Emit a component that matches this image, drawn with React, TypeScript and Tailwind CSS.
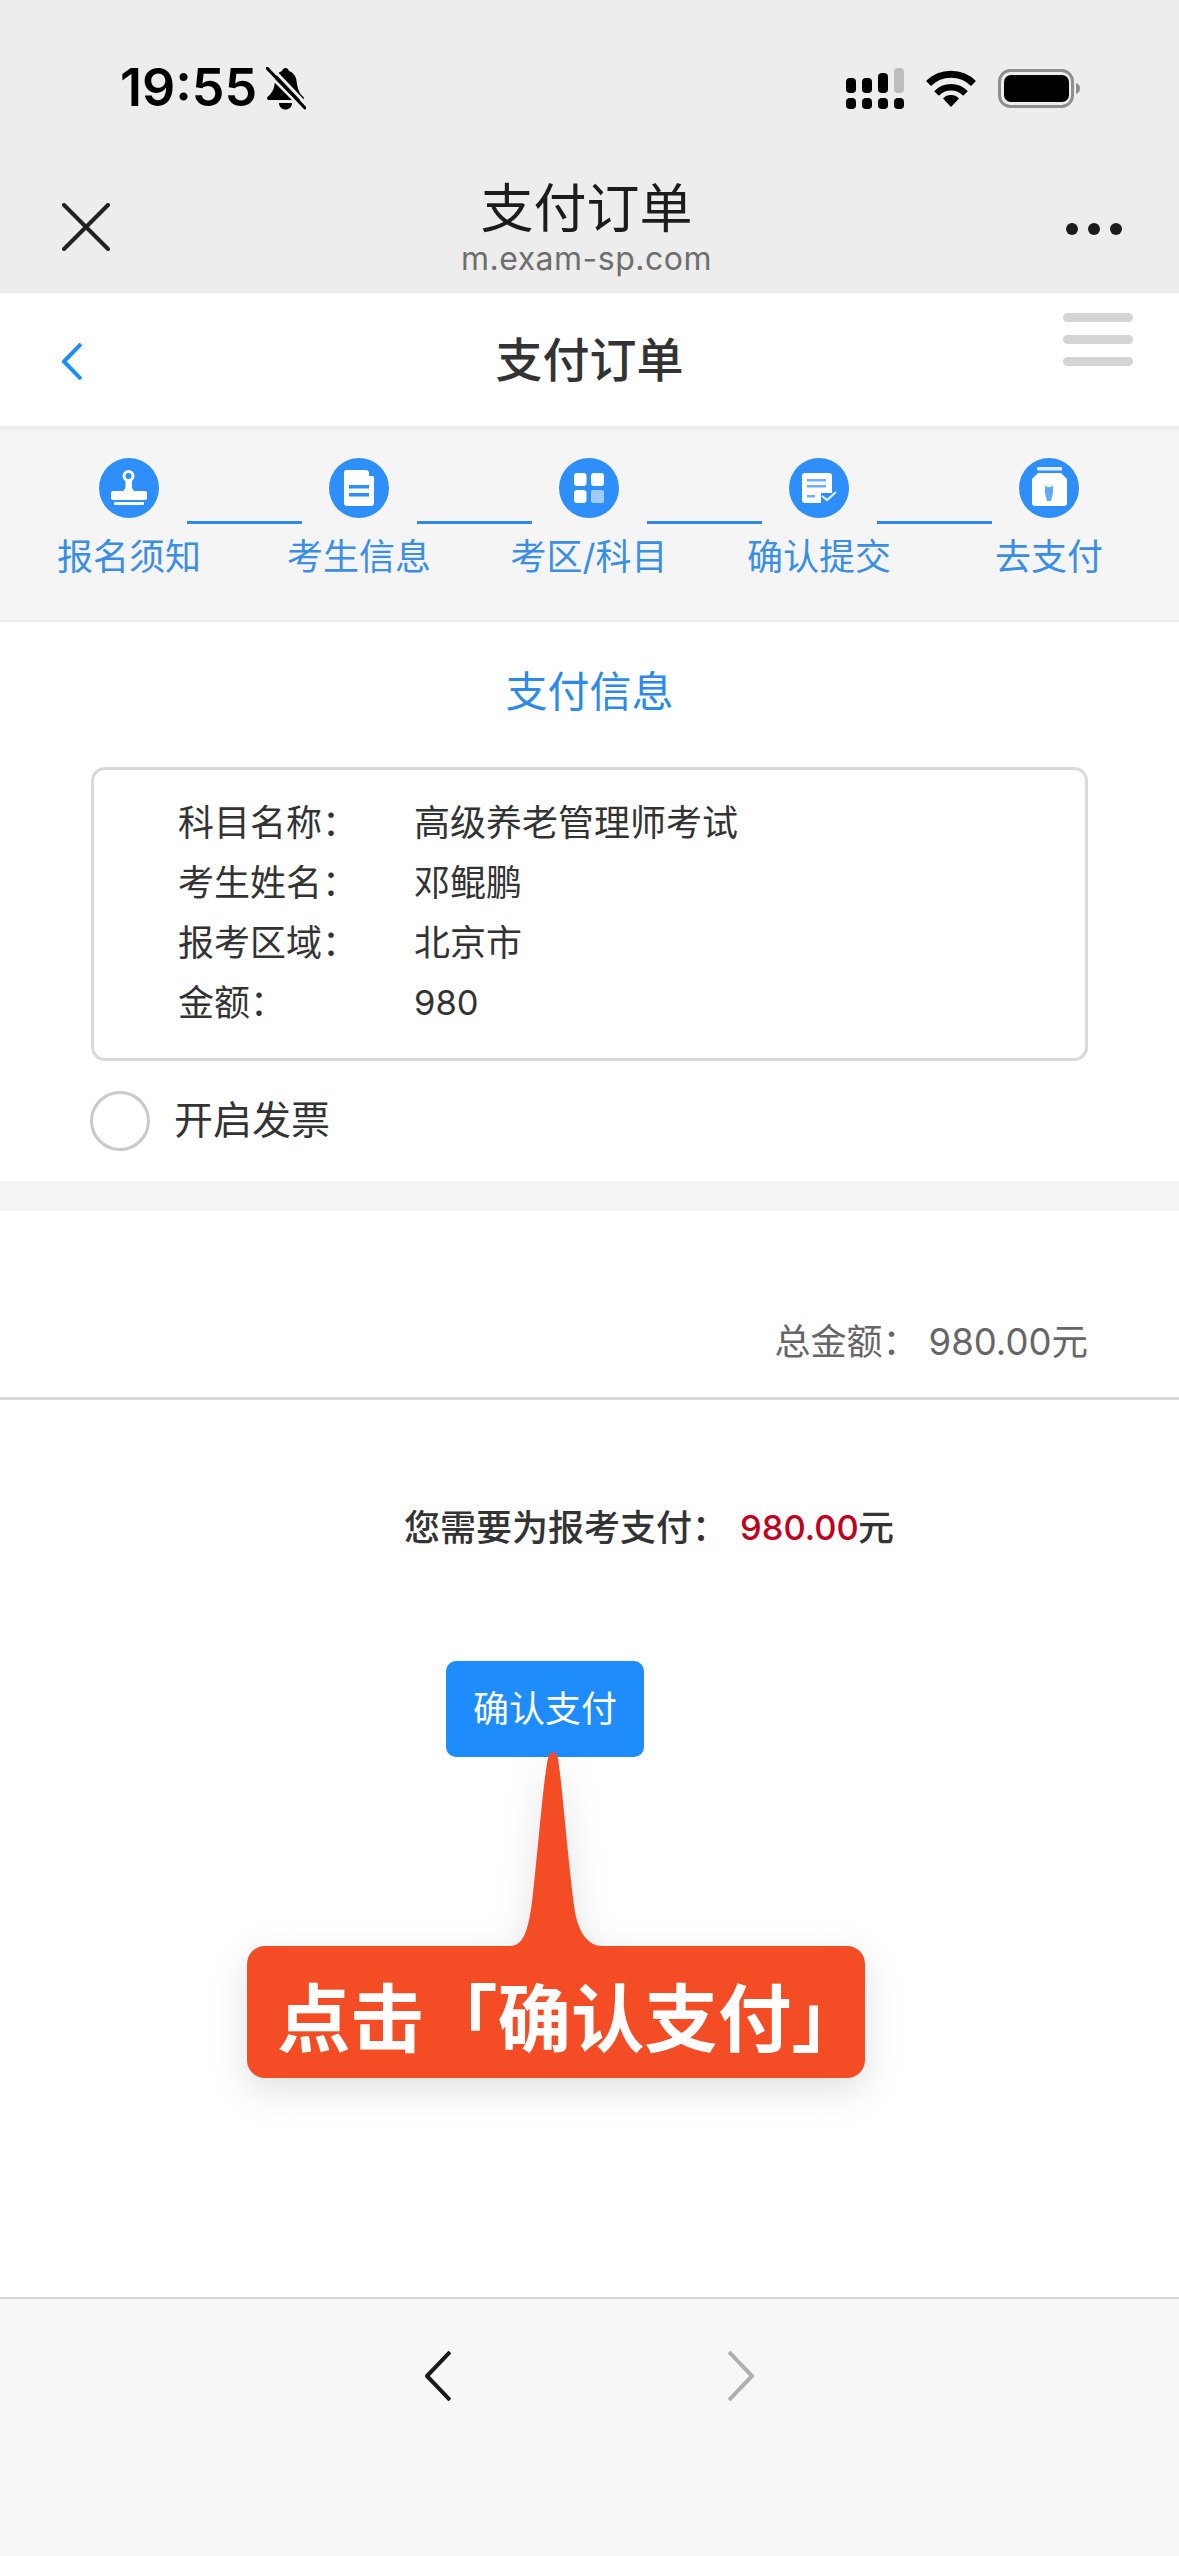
import React from "react";

const FONT = "font-['Inter','Noto_Sans_CJK_SC',sans-serif]";

function Signal() {
  return (
    <svg width="58" height="41" viewBox="0 0 58 41" className="block">
      <rect x="0" y="10" width="10" height="15" rx="4" fill="#000" />
      <rect x="16" y="10" width="10" height="15" rx="4" fill="#000" />
      <rect x="32" y="5" width="10" height="20" rx="4" fill="#000" />
      <rect x="48" y="0" width="10" height="25" rx="4" fill="#bdbdbd" />
      <rect x="0" y="30" width="10" height="11" rx="4" fill="#000" />
      <rect x="16" y="30" width="10" height="11" rx="4" fill="#000" />
      <rect x="32" y="30" width="10" height="11" rx="4" fill="#000" />
      <rect x="48" y="30" width="10" height="11" rx="4" fill="#000" />
    </svg>
  );
}

function Wifi() {
  return (
    <svg width="50" height="37" viewBox="0 0 50 37" className="block">
      <path d="M2.5 13.5 A32 32 0 0 1 47.5 13.5" fill="none" stroke="#000" strokeWidth="7" />
      <path d="M10.5 23.5 A20 20 0 0 1 39.5 23.5" fill="none" stroke="#000" strokeWidth="6.5" />
      <path d="M25 37 L17 28.5 A11 11 0 0 1 33 28.5 Z" fill="#000" />
    </svg>
  );
}

function Battery() {
  return (
    <svg width="83" height="39" viewBox="0 0 83 39" className="block">
      <rect x="1.5" y="1.5" width="73" height="36" rx="11" fill="none" stroke="#8e8e8e" strokeWidth="3" />
      <rect x="6" y="6" width="65" height="27" rx="7" fill="#000" />
      <path d="M78 14 C81 15 82 17 82 19.5 C82 22 81 24 78 25 Z" fill="#8e8e8e" />
    </svg>
  );
}

function BellOff() {
  return (
    <svg width="40" height="43" viewBox="0 0 40 43" className="block">
      <path d="M19.5 1 C17.5 1 16.5 2.5 16 4 C11.5 5.5 9.5 9.5 9 14 C8.3 21 7 25.5 1.5 30 C0.7 31 1 33 3 33 L36 33 C38 33 38.3 31 37.5 30 C33 26.5 31.5 21 30.5 14 C30 9.5 27.5 5.5 23 4 C22.5 2.5 21.5 1 19.5 1 Z" fill="#000" />
      <path d="M13 36 C13 40 16 42.5 19.5 42.5 C23 42.5 26 40 26 36 Z" fill="#000" />
      <path d="M-1 4 L36 41" stroke="#ededed" strokeWidth="3" />
      <path d="M1 1 L39 41" stroke="#000" strokeWidth="3" strokeLinecap="round" />
      <path d="M5 0 L41 38" stroke="#ededed" strokeWidth="3" />
    </svg>
  );
}

function Chevron({ color, dir, w, h, sw }: { color: string; dir: "l" | "r"; w: number; h: number; sw: number }) {
  const d = dir === "l" ? `M${w - 1} 1 L2 ${h / 2} L${w - 1} ${h - 1}` : `M1 1 L${w - 2} ${h / 2} L1 ${h - 1}`;
  return (
    <svg width={w} height={h} viewBox={`0 0 ${w} ${h}`} className="block">
      <path d={d} fill="none" stroke={color} strokeWidth={sw} strokeLinejoin="round" />
    </svg>
  );
}

const BLUE = "#2e8ffa";

function IconCircle({ children }: { children: React.ReactNode }) {
  return (
    <svg width="60" height="60" viewBox="0 0 60 60" className="block shrink-0">
      <circle cx="30" cy="30" r="30" fill={BLUE} />
      {children}
    </svg>
  );
}

const Stamp = () => (
  <IconCircle>
    <circle cx="29.5" cy="18" r="4.5" fill="none" stroke="#fff" strokeWidth="3" />
    <path d="M26.5 21 L33 21 L33 30 L35 33 L24 33 L26.5 30 Z" fill="#fff" />
    <rect x="12" y="33" width="36" height="9" rx="2" fill="#fff" />
    <rect x="15" y="44" width="30" height="3" rx="1" fill="#fff" />
  </IconCircle>
);

const Doc = () => (
  <IconCircle>
    <path d="M17 12 L38 12 L45 19 L45 45 Q45 48 42 48 L18 48 Q15 48 15 45 L15 14 Q15 12 17 12 Z" fill="#fff" />
    <rect x="20" y="27" width="20" height="3.5" fill={BLUE} />
    <rect x="20" y="35" width="20" height="3.5" fill={BLUE} />
    <path d="M40 12 L46 18 L40 18 Z" fill={BLUE} />
  </IconCircle>
);

const Grid = () => (
  <IconCircle>
    <rect x="15" y="15" width="12.5" height="13" rx="3" fill="#fff" />
    <rect x="32" y="15" width="13" height="13" rx="3" fill="#fff" />
    <rect x="15" y="32" width="12.5" height="13" rx="3" fill="#fff" />
    <rect x="32" y="32" width="13" height="13" rx="2" fill="#fff" opacity="0.55" />
  </IconCircle>
);

const Confirm = () => (
  <IconCircle>
    <rect x="13" y="15" width="30" height="30" rx="3" fill="#fff" />
    <rect x="18" y="21" width="19" height="2.5" fill={BLUE} opacity="0.7" />
    <rect x="18" y="27" width="19" height="2.5" fill={BLUE} opacity="0.7" />
    <rect x="18" y="37" width="8" height="2.5" fill={BLUE} opacity="0.7" />
    <path d="M32 35 L48 35 L48 45 L32 45 Z" fill={BLUE} />
    <path d="M33 38 L38 42 L47 34" fill="none" stroke="#fff" strokeWidth="2.2" opacity="0.85" />
  </IconCircle>
);

const Jar = () => (
  <IconCircle>
    <rect x="18" y="9" width="25" height="3.5" rx="1" fill="#fff" opacity="0.85" />
    <path d="M19 15 L42 15 L48 21 L48 45 Q48 48 45 48 L16 48 Q13 48 13 45 L13 21 Z" fill="#fff" />
    <path d="M26 27 L28 29 L32 29 L34 27 L34 35 L32 43 L28 43 L26 35 Z" fill={BLUE} opacity="0.75" />
  </IconCircle>
);

const STEPS = ["报名须知", "考生信息", "考区/科目", "确认提交", "去支付"];
const ICONS = [Stamp, Doc, Grid, Confirm, Jar];

const ROWS = [
  ["科目名称：", "高级养老管理师考试"],
  ["考生姓名：", "邓鲲鹏"],
  ["报考区域：", "北京市"],
  ["金额：", "980"],
];

function Connector() {
  return <div className="mx-[27.5px] mb-[-6px] h-[3px] w-[115px] shrink-0 self-end bg-[#2e8ae8]" />;
}

function Callout() {
  return (
    <div className="absolute left-[247px] top-[1752px] w-[618px] drop-shadow-[0_12px_18px_rgba(0,0,0,0.12)]">
      <svg width="618" height="196" viewBox="0 0 618 196" className="mb-[-2px] block">
        <path
          d="M263 194 C276 194 281 180 285 150 C291 100 296 30 301 6 C303 -2 309 -2 311 6 C316 40 321 110 328 160 C332 182 342 194 355 194 Z"
          fill="#f44c25"
        />
      </svg>
      <div className="flex h-[132px] items-start justify-center rounded-[18px] bg-[#f44c25] pl-[30px] pt-[28px] text-[73.5px] font-bold leading-[92px] text-white">
        点击「确认支付」
      </div>
    </div>
  );
}

export default function App() {
  return (
    <div className={`${FONT} relative flex h-[2556px] w-[1179px] flex-col overflow-hidden bg-white text-[#333]`}>
      {/* system + webview chrome */}
      <div className="h-[293px] shrink-0 bg-[#ededed]">
        <div className="mt-[67px] flex h-[42px] items-center justify-between pl-[120px] pr-[98px]">
          <div className="flex items-center gap-[9px]">
            <span className="text-[52px] font-semibold leading-[42px] text-black">19:55</span>
            <BellOff />
          </div>
          <div className="flex items-center gap-[22px]">
            <Signal />
            <Wifi />
            <Battery />
          </div>
        </div>
        <div className="mt-[69px] flex h-[115px] items-start justify-between pl-[62px] pr-[57px]">
          <svg width="48" height="48" viewBox="0 0 48 48" className="mt-[25px] block">
            <path d="M2 2 L46 46 M46 2 L2 46" stroke="#222" strokeWidth="4" strokeLinecap="round" />
          </svg>
          <div className="ml-[-3px] flex flex-col items-center">
            <div className="text-[53px] font-normal leading-[62px] text-[#1c1c1c]">支付订单</div>
            <div className="text-[32px] leading-[38px] tracking-[0.5px] text-[#6e6e6e]">m.exam-sp.com</div>
          </div>
          <div className="mt-[45px] flex gap-[10px]">
            <div className="h-[12px] w-[12px] rounded-full bg-[#1c1c1c]" />
            <div className="h-[12px] w-[12px] rounded-full bg-[#1c1c1c]" />
            <div className="h-[12px] w-[12px] rounded-full bg-[#1c1c1c]" />
          </div>
        </div>
      </div>

      {/* page header */}
      <div className="grid h-[138px] shrink-0 grid-cols-[1fr_auto_1fr] items-start border-b-[5px] border-[#eeeeee] px-[46px]">
        <div className="ml-[16px] mt-[50px]">
          <Chevron color="#1e8cfb" dir="l" w={20} h={37} sw={4} />
        </div>
        <div className="mt-[39px] text-[47px] font-medium leading-[56px] text-[#333]">支付订单</div>
        <div className="mt-[20px] flex w-[70px] flex-col gap-[13px] justify-self-end">
          <div className="h-[9px] rounded-full bg-[#d4d4d4]" />
          <div className="h-[9px] rounded-full bg-[#d4d4d4]" />
          <div className="h-[9px] rounded-full bg-[#d4d4d4]" />
        </div>
      </div>

      {/* steps */}
      <div className="h-[191px] shrink-0 border-b-[2px] border-[#ececec] bg-[#f5f5f5]">
        <div className="flex pl-[99px] pt-[27px]">
          {ICONS.map((Icon, i) => (
            <React.Fragment key={i}>
              <Icon />
              {i < 4 && <Connector />}
            </React.Fragment>
          ))}
        </div>
        <div className="mt-[16px] grid grid-cols-[repeat(5,230px)] pl-[14px]">
          {STEPS.map((s) => (
            <div key={s} className="text-center text-[36px] leading-[46px] text-[#3a8ee6]">
              {s}
            </div>
          ))}
        </div>
      </div>

      {/* pay info */}
      <div className="flex h-[140px] shrink-0 items-center justify-center text-[42px] leading-[50px] text-[#2e8ae8]">
        支付信息
      </div>
      <div className="mx-[91px] mt-[5px] h-[294px] shrink-0 rounded-[14px] border-[3px] border-[#d9d9d9] pl-[84px] pt-[23px]">
        {ROWS.map(([k, v]) => (
          <div key={k} className="grid h-[60px] grid-cols-[236px_1fr] items-center text-[36px] leading-[60px] text-[#333]">
            <span>{k}</span>
            <span className={v === "980" ? "text-[34.5px]" : ""}>{v}</span>
          </div>
        ))}
      </div>
      <div className="ml-[90px] mt-[30px] flex h-[60px] shrink-0 items-center gap-[24px]">
        <div className="h-[60px] w-[60px] rounded-full border-[3px] border-[#c9c9c9]" />
        <span className="mt-[-3px] text-[39px] leading-[60px] text-[#333]">开启发票</span>
      </div>
      <div className="mt-[30px] h-[30px] shrink-0 bg-[#f4f4f4]" />

      {/* total */}
      <div className="flex h-[189px] shrink-0 items-end justify-end gap-[10px] border-b-[3px] border-[#d9d9d9] pb-[30px] pr-[91px] text-[#666]">
        <span className="text-[36px] leading-[50px]">总金额：</span>
        <span className="text-[36.5px] leading-[50px]">980.00元</span>
      </div>

      <div className="ml-[404px] mt-[103px] flex h-[50px] shrink-0 items-center text-[36px] font-medium leading-[50px] text-[#333]">
        <span>您需要为报考支付：</span>
        <span className="ml-[12px] text-[34.5px] text-[#c0001f]">980.00</span>
        <span className="ml-[-1px]">元</span>
      </div>

      <div className="ml-[446px] mt-[108px] flex h-[96px] w-[198px] shrink-0 items-center justify-center rounded-[10px] bg-[#1e8cfb] text-[36px] leading-[50px] text-white">
        确认支付
      </div>

      <div className="flex-1" />

      {/* bottom toolbar */}
      <div className="flex h-[259px] shrink-0 items-start justify-center gap-[277px] border-t-[2px] border-[#d4d4d4] bg-[#f7f7f7] pt-[52px]">
        <Chevron color="#1a1a1a" dir="l" w={26} h={50} sw={4} />
        <Chevron color="#b0b0b0" dir="r" w={26} h={50} sw={4} />
      </div>

      <Callout />
    </div>
  );
}
